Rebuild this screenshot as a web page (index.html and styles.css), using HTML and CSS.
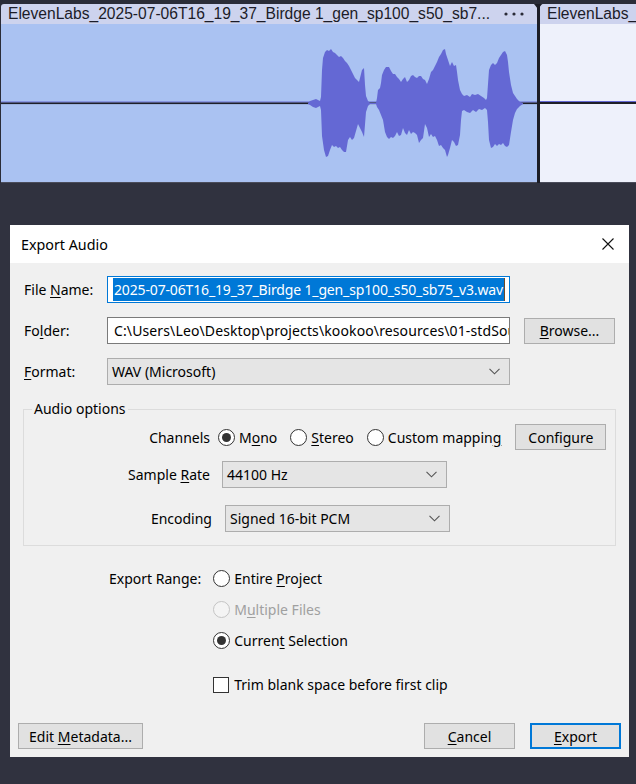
FILE: index.html
```html
<!DOCTYPE html>
<html>
<head>
<meta charset="utf-8">
<link rel="stylesheet" href="styles.css">
</head>
<body>
<div class="track">
  <div class="clip clip-main">
    <div class="clip-header">
      <span class="clip-name">ElevenLabs_2025-07-06T16_19_37_Birdge 1_gen_sp100_s50_sb7...</span>
      <svg class="clip-menu" width="24" height="6" viewBox="0 0 24 6"><circle cx="3" cy="3" r="1.6"/><circle cx="11" cy="3" r="1.6"/><circle cx="19" cy="3" r="1.6"/></svg>
    </div>
    <div class="clip-body">
      <svg class="wave" width="536" height="158" viewBox="1 24 536 158" preserveAspectRatio="none">
        <rect x="1" y="101.5" width="536" height="1" fill="#6468d4"/>
        <rect x="1" y="102.5" width="536" height="1.6" fill="#1e1f28"/>
        <path fill="#6468d4" d="M308 103 L310 101 L313 100 L316 99 L318 100 L320 101 L321 97 L322 70 L323 58 L325 52 L327 50 L329 51 L331 49 L333 52 L335 53 L337 55 L339 57 L341 56 L343 58 L345 61 L347 63 L349 66 L351 70 L353 74 L355 78 L357 80 L359 82 L360 78 L362 70 L364 68 L365 85 L366 96 L368 101 L370 103 L376 103 L377 98 L378 90 L380 88 L381 83 L382 75 L384 70 L386 67 L389 67 L391 71 L393 74 L395 74 L397 77 L399 79 L401 82 L403 79 L405 77 L407 82 L409 80 L411 76 L413 75 L415 77 L417 78 L419 76 L421 76 L423 79 L425 80 L427 84 L429 79 L431 72 L433 70 L435 66 L437 62 L439 57 L441 54 L443 50 L445 49 L446 54 L448 60 L450 66 L452 62 L454 66 L456 65 L457 72 L458 80 L460 90 L462 94 L464 96 L467 95 L470 97 L472 94 L475 95 L478 94 L481 96 L484 98 L486 100 L487 98 L488 84 L489 70 L491 65 L493 63 L495 65 L497 63 L499 58 L501 55 L503 52 L505 51 L507 55 L508 62 L509 72 L511 85 L513 93 L515 96 L517 99 L520 102 L523 103 L523 104 L520 106 L517 109 L515 113 L513 120 L511 132 L509 145 L507 147 L505 146 L503 143 L501 145 L499 144 L497 146 L495 144 L493 147 L491 148 L489 140 L488 122 L487 110 L485 108 L482 110 L479 109 L476 112 L473 110 L470 113 L467 112 L464 110 L462 111 L461 120 L460 135 L458 145 L456 146 L454 142 L452 140 L450 148 L448 155 L447 157 L445 150 L443 148 L441 145 L439 146 L437 140 L435 136 L433 137 L431 134 L429 137 L427 128 L425 124 L423 138 L421 140 L419 143 L417 135 L415 133 L413 132 L411 134 L409 130 L407 135 L405 133 L403 128 L401 135 L399 136 L397 132 L395 136 L393 138 L391 137 L389 139 L387 137 L385 132 L383 120 L381 115 L379 110 L377 107 L376 104 L370 104 L368 106 L366 112 L364 137 L362 132 L360 128 L358 124 L356 131 L354 138 L352 140 L350 137 L348 140 L346 152 L344 152 L342 150 L340 147 L338 148 L336 146 L334 147 L332 145 L330 150 L328 156 L326 157 L324 150 L322 136 L321 110 L320 106 L318 107 L316 108 L313 107 L310 105 L308 104 Z"/>
      </svg>
    </div>
  </div>
  <div class="clip-divider"></div>
  <div class="clip clip-next">
    <div class="clip-header">
      <span class="clip-name">ElevenLabs_2025-07-06T16_19_37</span>
    </div>
    <div class="clip-body clip-body-empty"></div>
  </div>
</div>

<div class="dialog">
  <div class="titlebar">
    <span class="title">Export Audio</span>
    <svg class="close" width="12" height="12" viewBox="0 0 12 12"><path d="M0.5 0.5 L11.5 11.5 M11.5 0.5 L0.5 11.5" stroke="#111" stroke-width="1.1" fill="none"/></svg>
  </div>
  <div class="dialog-body">
    <div class="form">
      <div class="file-grid">
        <label class="lbl">File <u>N</u>ame:</label>
        <div class="textfield focused"><span class="sel">2025-07-06T16_19_37_Birdge 1_gen_sp100_s50_sb75_v3.wav</span></div>
        <div></div>

        <label class="lbl">Fo<u>l</u>der:</label>
        <div class="textfield"><span class="plain">C:\Users\Leo\Desktop\projects\kookoo\resources\01-stdSounds</span></div>
        <button class="btn browse"><span><u>B</u>rowse...</span></button>

        <label class="lbl"><u>F</u>ormat:</label>
        <div class="combo combo-format"><span>WAV (Microsoft)</span><svg class="chev" width="11" height="7" viewBox="0 0 11 7"><path d="M0.5 0.8 L5.5 5.8 L10.5 0.8" stroke="#555" stroke-width="1.1" fill="none"/></svg></div>
        <div></div>
      </div>

      <fieldset class="group">
        <legend>Audio options</legend>
        <div class="opt-row row-channels">
          <span class="opt-lbl">Channels</span>
          <div class="radios">
            <span class="radio-item"><span class="radio checked"></span><span>M<u>o</u>no</span></span>
            <span class="radio-item"><span class="radio"></span><span><u>S</u>tereo</span></span>
            <span class="radio-item"><span class="radio"></span><span>Custom mappin<u>g</u></span></span>
          </div>
          <button class="btn configure"><span>Configure</span></button>
        </div>
        <div class="opt-row row-rate">
          <span class="opt-lbl">Sample <u>R</u>ate</span>
          <div class="combo combo-small"><span>44100 Hz</span><svg class="chev" width="11" height="7" viewBox="0 0 11 7"><path d="M0.5 0.8 L5.5 5.8 L10.5 0.8" stroke="#555" stroke-width="1.1" fill="none"/></svg></div>
        </div>
        <div class="opt-row row-enc">
          <span class="opt-lbl">Encoding</span>
          <div class="combo combo-small"><span>Signed 16-bit PCM</span><svg class="chev" width="11" height="7" viewBox="0 0 11 7"><path d="M0.5 0.8 L5.5 5.8 L10.5 0.8" stroke="#555" stroke-width="1.1" fill="none"/></svg></div>
        </div>
      </fieldset>

      <div class="range-grid">
        <span class="range-lbl">Export Range:</span>
        <span class="radio-item"><span class="radio"></span><span>Entire <u>P</u>roject</span></span>
        <span></span>
        <span class="radio-item disabled"><span class="radio"></span><span>M<u>u</u>ltiple Files</span></span>
        <span></span>
        <span class="radio-item"><span class="radio checked"></span><span>Curren<u>t</u> Selection</span></span>
        <span></span>
        <span class="radio-item check-row"><span class="checkbox"></span><span>Trim blank space before first clip</span></span>
      </div>
    </div>

    <div class="footer">
      <button class="btn metadata"><span>Edit <u>M</u>etadata...</span></button>
      <div class="spacer"></div>
      <button class="btn action"><span><u>C</u>ancel</span></button>
      <button class="btn action default"><span><u>E</u>xport</span></button>
    </div>
  </div>
</div>
</body>
</html>
```

FILE: styles.css
```css
* { box-sizing: border-box; }

body {
  margin: 0;
  width: 636px;
  height: 784px;
  overflow: hidden;
  background: #30323f;
  font-family: "Noto Sans", "Open Sans", sans-serif;
  font-size: 14px;
  color: #000;
}

u { text-decoration: underline; text-underline-offset: 2px; text-decoration-thickness: 1px; }

/* ---------- track ---------- */
.track {
  height: 183px;
  padding: 4px 0 0 1px;
  display: flex;
  background: #2a2c38;
}

.clip {
  display: flex;
  flex-direction: column;
}

.clip-main { width: 536px; }
.clip-next { flex: 1; min-width: 0; }

.clip-header {
  height: 20px;
  flex: none;
  background: #cdd3ee;
  border-top-left-radius: 3px;
  display: flex;
  align-items: center;
  padding-left: 7px;
  overflow: hidden;
  white-space: nowrap;
}

.clip-name {
  font-family: "Liberation Sans", Arial, sans-serif;
  font-size: 15.6px;
  color: #1c1c28;
  flex: 1;
  overflow: hidden;
}

.clip-menu {
  fill: #2a2a36;
  margin-right: 10px;
  flex: none;
}

.clip-body {
  flex: 1;
  background: #aac2f2;
  border-bottom: 1px solid #4a4c5a;
}

.wave { display: block; }

.clip-body-empty {
  background: linear-gradient(to bottom, #eef1fb 77.5px, #6468d4 77.5px, #6468d4 78.5px, #1e1f28 78.5px, #1e1f28 80px, #eef1fb 80px);
}

.clip-divider {
  width: 3px;
  flex: none;
  background: #1c1d26;
  position: relative;
}

.clip-divider::before {
  content: "";
  position: absolute;
  top: 0;
  left: -3px;
  border-left: 4.5px solid transparent;
  border-right: 4.5px solid transparent;
  border-top: 5px solid #1c1d26;
}

/* ---------- dialog ---------- */
.dialog {
  margin: 42px 0 0 10px;
  width: 619px;
  height: 532px;
  background: #f0f0f0;
  display: flex;
  flex-direction: column;
}

.titlebar {
  height: 38px;
  flex: none;
  background: #fff;
  display: flex;
  align-items: center;
  justify-content: space-between;
  padding: 0 15px 0 11px;
}

.title { font-size: 14.3px; }

.close { display: block; }

.dialog-body {
  flex: 1;
  display: flex;
  flex-direction: column;
  padding: 0 8px 8px 8px;
}

.form { padding: 13px 6px 0 6px; }

.file-grid {
  display: grid;
  grid-template-columns: 83px 403px auto;
  grid-auto-rows: 27px;
  row-gap: 14px;
  align-items: center;
}

.lbl { white-space: nowrap; }

.textfield {
  height: 27px;
  background: #fff;
  border: 1px solid #7a7a7a;
  overflow: hidden;
  white-space: nowrap;
  display: flex;
  align-items: center;
}

.textfield.focused {
  border-color: #0078d7;
  padding: 1px 4px 1px 5px;
}

.sel {
  display: block;
  flex: 1;
  overflow: hidden;
  background: #0078d7;
  color: #fff;
  line-height: 23px;
  padding-left: 1px;
  letter-spacing: -0.15px;
  border-right: 1px solid #6b4a2a;
}

.plain {
  padding-left: 6px;
  overflow: hidden;
  letter-spacing: 0.12px;
}

.btn {
  font-family: inherit;
  font-size: 14px;
  color: #000;
  background: #e1e1e1;
  border: 1px solid #adadad;
  height: 26px;
  padding: 0;
  margin: 0;
  display: flex;
  align-items: center;
  justify-content: center;
  white-space: nowrap;
}

.browse { width: 91px; margin-left: 14px; }

.combo {
  height: 27px;
  background: #e5e5e5;
  border: 1px solid #adadad;
  display: flex;
  align-items: center;
  justify-content: space-between;
  padding: 0 9px 0 4px;
}

.chev { display: block; }

/* group box */
.group {
  margin: 15px -1px 0 -1px;
  border: 1px solid #dcdcdc;
  padding: 0 0 13px 8px;
  min-width: 0;
}

.group legend {
  padding: 0 2px;
  line-height: 18px;
}

.opt-row {
  display: flex;
  align-items: center;
}

.row-channels { margin-top: 6px; height: 26px; }
.row-rate { margin-top: 11px; height: 27px; }
.row-enc { margin-top: 17px; height: 27px; }

.opt-lbl {
  width: 178px;
  text-align: right;
  white-space: nowrap;
}

.row-channels .opt-lbl { margin-right: 8px; }
.row-rate .opt-lbl { margin-right: 12px; }
.row-enc .opt-lbl { width: 180px; margin-right: 13px; }

.combo-small { width: 225px; }

.radios {
  display: flex;
  align-items: center;
  gap: 12px;
}

.radios .radio-item + .radio-item { margin-left: 1px; }

.radio-item {
  display: flex;
  align-items: center;
  white-space: nowrap;
  height: 21px;
}

.radio {
  width: 17px;
  height: 17px;
  border: 1px solid #333;
  border-radius: 50%;
  background: #fff;
  margin-right: 4px;
  flex: none;
  display: flex;
  align-items: center;
  justify-content: center;
}

.radio.checked::after {
  content: "";
  width: 9px;
  height: 9px;
  border-radius: 50%;
  background: #333;
}

.radio-item.disabled { color: #a0a0a0; }
.radio-item.disabled .radio { border-color: #c4c4c4; background: #f4f4f4; }

.configure { width: 91px; margin-left: 14px; }

/* export range */
.range-grid {
  display: grid;
  grid-template-columns: auto auto;
  justify-content: start;
  column-gap: 12px;
  row-gap: 10px;
  margin: 22px 0 0 85px;
  align-items: center;
}

.range-lbl { white-space: nowrap; }

.check-row { margin-top: 13px; }

.checkbox {
  width: 16px;
  height: 16px;
  border: 1px solid #333;
  background: #fff;
  margin-right: 5px;
  flex: none;
}

/* footer */
.footer {
  margin-top: auto;
  display: flex;
  align-items: center;
  gap: 15px;
}

.spacer { flex: 1; }

.metadata { width: 125px; }
.action { width: 91px; }
.default { border: 2px solid #0078d7; }
```
